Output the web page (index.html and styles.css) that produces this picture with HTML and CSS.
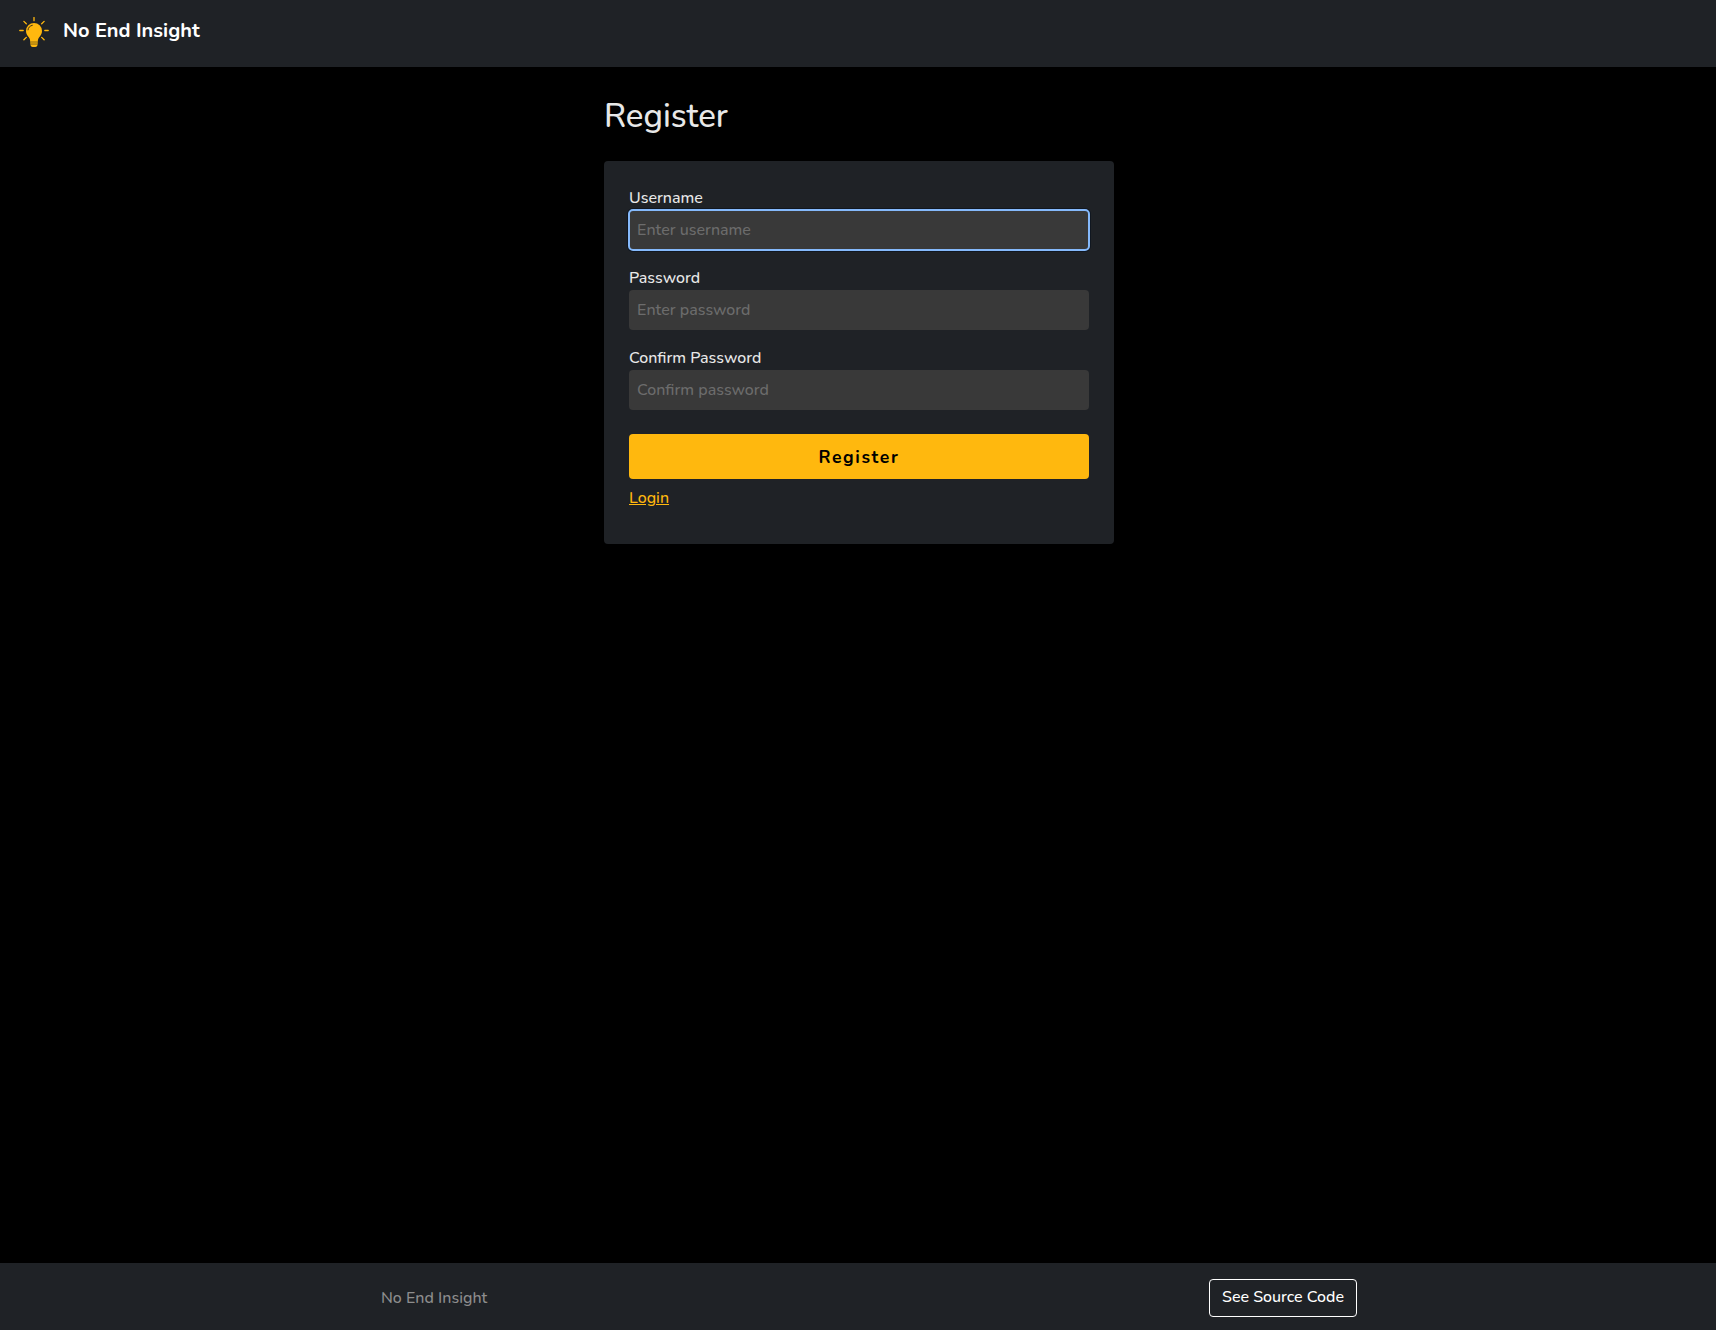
FILE: index.html
```html
<!DOCTYPE html>
<html lang="en">
<head>
<meta charset="utf-8">
<title>No End Insight</title>
<link rel="stylesheet" href="styles.css">
</head>
<body>
<header class="navbar">
  <svg class="logo" viewBox="0 0 30 30" aria-hidden="true">
    <g class="rays">
      <path d="M15 .5v3.2M.8 13.5h3.4M25.8 13.5h3.4M4.9 4.4l2.4 2.3M25.1 4.4l-2.4 2.3M4.9 22.8l2.4-2.4M25.1 22.8l-2.4-2.4"/>
    </g>
    <path class="bulb" d="M15 6a8 8 0 0 0-8 8c0 2.8 1.4 4.6 2.8 6.2 1 1.2 1.3 2.4 1.4 4.6h7.6c.1-2.2.4-3.4 1.4-4.6C21.600 18.600 23 16.800 23 14a8 8 0 0 0-8-8z"/>
    <path class="socket" d="M11.200 24.600h7.600v3h-7.600z"/>
    <path class="bulb" d="M11.500 27.500h7c0 1.400-.8 2.400-2.200 2.400h-2.600c-1.400 0-2.200-1-2.200-2.400z"/>
    <path class="shine" d="M9 12.900c.3-2.500 1.800-4 4.300-4.600"/>
  </svg>
  <a class="brand">No End Insight</a>
</header>
<main class="page">
  <h1 class="title">Register</h1>
  <form class="card">
    <div class="field">
      <label class="label" for="username">Username</label>
      <input class="input input-active" id="username" type="text" placeholder="Enter username">
    </div>
    <div class="field">
      <label class="label label-password" for="password">Password</label>
      <input class="input" id="password" type="password" placeholder="Enter password">
    </div>
    <div class="field">
      <label class="label label-confirm" for="confirm">Confirm Password</label>
      <input class="input input-confirm" id="confirm" type="password" placeholder="Confirm password">
    </div>
    <button class="submit" type="button">Register</button>
    <a class="login" href="#">Login</a>
  </form>
</main>
<footer class="footer">
  <div class="footer-inner">
    <span class="footer-name">No End Insight</span>
    <a class="source">See Source Code</a>
  </div>
</footer>
</body>
</html>
```
FILE: styles.css
```css
* { box-sizing: border-box; }

body {
  margin: 0;
  min-height: 100vh;
  display: flex;
  flex-direction: column;
  background: #000;
  color: #e8e8e8;
  font: 500 16px/20px Nunito, Lato, "Open Sans", sans-serif;
}

.navbar {
  display: flex;
  align-items: flex-start;
  height: 67px;
  padding: 17px 19px;
  background: #1f2226;
}

.logo { width: 30px; height: 30px; }
.bulb { fill: #ffb80e; }
.socket { fill: #c5910f; }
.rays { fill: none; stroke: #ffb80e; stroke-width: 1.3; stroke-linecap: round; }
.shine { fill: none; stroke: #3a301b; stroke-width: 1; stroke-linecap: round; }

.brand {
  margin-left: 14px;
  color: #fff;
  font-size: 20px;
  font-weight: 700;
  line-height: 28px;
}

.page {
  flex: 1;
  width: 510px;
  margin-left: 604px;
}

.title {
  margin: 30px 0 24px;
  font-size: 33px;
  font-weight: 500;
  line-height: 40px;
}

.card {
  height: 383px;
  padding: 27px 25px 0;
  border-radius: 4px;
  background: #1f2226;
}

.field { height: 80px; }
.label { display: block; height: 22px; line-height: 20px; }

.input {
  display: block;
  width: 100%;
  height: 40px;
  padding: 0 8px;
  border: 0;
  border-radius: 4px;
  background: #393939;
  color: #e8e8e8;
  font: inherit;
}

.input::placeholder { color: #6c6c6c; opacity: 1; }

.input-active {
  outline: 2px solid #85b9fb;
  outline-offset: -1px;
  box-shadow: 0 0 0 2px #101720;
}

.submit {
  display: block;
  width: 100%;
  height: 45px;
  margin-top: 6px;
  border: 0;
  border-radius: 4px;
  background: #ffb80e;
  color: #000;
  font: inherit;
  font-size: 17.600px;
  font-weight: 700;
  letter-spacing: 1.600px;
}

.login {
  display: inline-block;
  margin-top: 9px;
  color: #ffb80e;
}

.footer { height: 67px; background: #1f2226; }

.footer-inner {
  display: flex;
  justify-content: space-between;
  align-items: center;
  width: 976px;
  height: 66px;
  margin-left: 381px;
  padding-top: 3px;
}

.footer-name { color: #8d8d8d; }

.source {
  width: 148px;
  height: 38px;
  border: 1px solid #fff;
  border-radius: 4px;
  color: #fff;
  line-height: 35px;
  text-align: center;
}
```
